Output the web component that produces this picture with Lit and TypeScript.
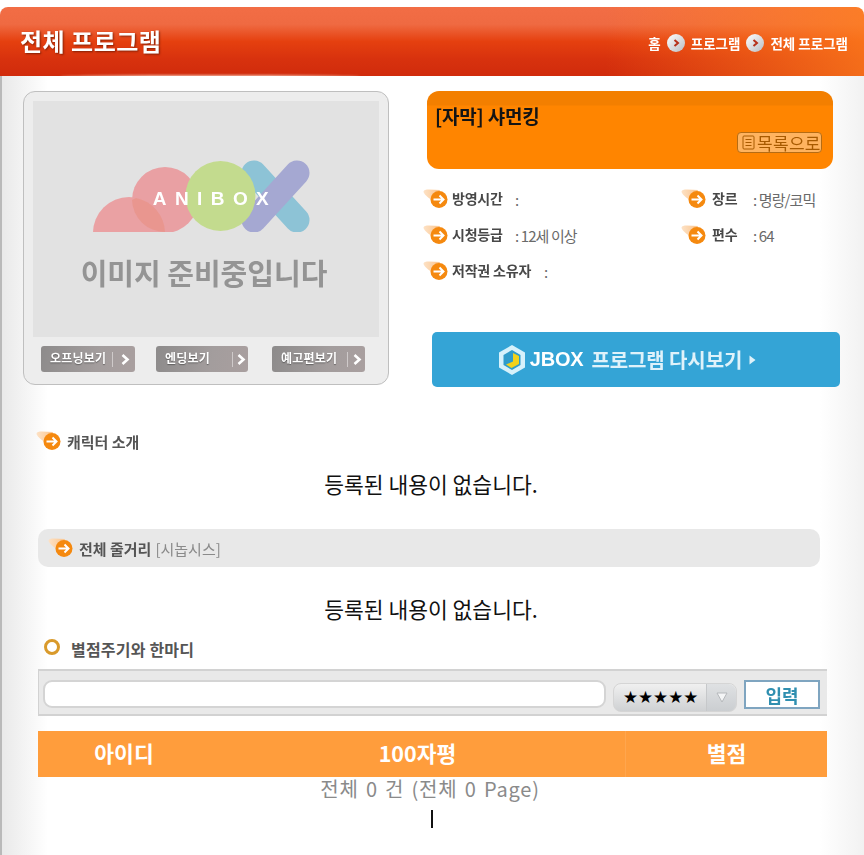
import { LitElement, html, css, svg } from 'lit';
import { customElement } from 'lit/decorators.js';

const arrowIcon = html`<svg class="arrow" width="26" height="20" viewBox="0 0 26 20">
  <defs>
    <linearGradient id="swoosh" x1="0" y1="0" x2="1" y2="0">
      <stop offset="0" stop-color="#fde2c6" />
      <stop offset="1" stop-color="#fbc48c" />
    </linearGradient>
  </defs>
  <path d="M0.5 3 C0.5 1 3 0.5 6 0.5 L17 1 L12 12 C8 11 1.5 6.5 0.5 3Z" fill="url(#swoosh)" />
  <circle cx="16" cy="10.5" r="8.5" fill="#f5890f" />
  <path d="M10.5 10.5 H20 M16.5 6.5 L20.5 10.5 L16.5 14.5" fill="none" stroke="#fff" stroke-width="2" />
</svg>`;

const crumbDot = html`<svg class="dot" width="18" height="18" viewBox="0 0 18 18">
  <defs>
    <linearGradient id="dotfill" x1="0" y1="0" x2="1" y2="1">
      <stop offset="0" stop-color="#ffffff" />
      <stop offset="1" stop-color="#b9bcc2" />
    </linearGradient>
  </defs>
  <circle cx="9" cy="9" r="9" fill="url(#dotfill)" />
  <path d="M7.5 6 L11 9 L7.5 12" fill="none" stroke="#b6301a" stroke-width="2" />
</svg>`;

const logo = svg`<svg class="logo" width="230" height="76" viewBox="90 158 230 76">
  <defs><clipPath id="base"><rect x="90" y="150" width="230" height="82" /></clipPath></defs>
  <g clip-path="url(#base)">
    <circle cx="166" cy="200" r="33" fill="#e9a0a3" />
    <circle cx="130" cy="233" r="36" fill="#eaa1a3" />
    <path d="M133 200 A33 33 0 0 0 166 232 A36 36 0 0 0 137 198 Z" fill="#e8938a" opacity=".8" />
    <path d="M255 173 L298 220" stroke="#8dc3d6" stroke-width="25" stroke-linecap="round" />
    <path d="M298 173 L255 220" stroke="#a5a8d2" stroke-width="25" stroke-linecap="round" />
    <circle cx="221.5" cy="196" r="35" fill="#c3db8e" />
  </g>
  <text x="216" y="205" text-anchor="middle" fill="#fff" font-size="19" font-weight="700"
    letter-spacing="8.4" font-family="Liberation Sans, sans-serif">ANIBOX</text>
</svg>`;

@customElement('app-root')
export class AppRoot extends LitElement {
  static styles = css`
    :host {
      display: block;
      min-height: 855px;
      padding-top: 7px;
      box-sizing: border-box;
      background: #fff;
      font-family: 'Noto Sans CJK KR', 'Noto Sans', sans-serif;
    }
    .head {
      position: relative;
      height: 69px;
      border-radius: 8px 8px 0 0;
      display: flex;
      align-items: center;
      justify-content: space-between;
      padding: 0 16px 0 20px;
      overflow: hidden;
      background:
        linear-gradient(90deg, rgba(255, 140, 40, 0) 70%, rgba(255, 130, 30, 0.75) 100%),
        linear-gradient(180deg, #f26d45 0%, #ef6a42 25%, #e5400f 50%, #d8320e 75%, #d02b0c 100%);
    }
    .head::after {
      content: '';
      position: absolute;
      left: 60px;
      bottom: -2px;
      width: 300px;
      height: 3px;
      border-radius: 50%;
      background: #f3b7a2;
      filter: blur(1px);
    }
    .head h1 {
      margin: 0 0 1px;
      font-size: 24px;
      line-height: 30px;
      font-weight: 700;
      color: #fff;
      text-shadow: 1px 1px 2px rgba(90, 20, 0, 0.7);
      letter-spacing: 0.5px;
      filter: blur(0.3px);
    }
    .crumbs {
      display: flex;
      align-items: center;
      gap: 5px;
      margin-top: 3px;
      color: #fff;
      font-size: 13.5px;
      font-weight: 700;
      letter-spacing: 0;
      filter: blur(0.3px);
    }
    .dot {
      margin: 0 1px;
    }
    .body {
      min-height: 779px;
      padding-top: 15px;
      box-sizing: border-box;
      border-left: 2px solid #b9b9b9;
      background: linear-gradient(
        90deg,
        #e9e9e9 0,
        #ffffff 46px,
        #ffffff 818px,
        #f1f1f1 864px
      );
    }
    .top {
      display: flex;
      height: 296px;
      padding-left: 21px;
    }
    .card {
      width: 366px;
      height: 294px;
      box-sizing: border-box;
      border: 1px solid #bfbfbf;
      border-radius: 12px;
      background: #ededed;
      padding: 9px 9px 0;
    }
    .noimg {
      height: 236px;
      background: #e2e2e2;
      display: flex;
      flex-direction: column;
      align-items: center;
      padding-top: 57px;
      box-sizing: border-box;
    }
    .logo {
      display: block;
      margin-right: 5px;
      filter: blur(0.5px);
    }
    .noimg p {
      margin: 18px 4px 0 0;
      font-size: 29px;
      line-height: 40px;
      font-weight: 700;
      color: #949494;
      filter: blur(0.7px);
    }
    .btns {
      display: flex;
      padding: 9px 0 0 8px;
    }
    .btn {
      height: 26px;
      border-radius: 3px;
      background: linear-gradient(100deg, #8d8b8b, #a39d9d 60%, #a99f9f);
      color: #fff;
      font-size: 12px;
      font-weight: 700;
      letter-spacing: 0.2px;
      display: flex;
      align-items: center;
      box-sizing: border-box;
      padding: 0 0 3px 9px;
      position: relative;
      text-shadow: 0 1px 1px rgba(60, 60, 60, 0.6);
      filter: blur(0.3px);
    }
    .btn i {
      position: absolute;
      top: 6px;
      width: 1px;
      height: 15px;
      background: #cfcaca;
    }
    .btn svg {
      position: absolute;
      top: 8px;
    }
    .right {
      width: 415px;
      margin-left: 38px;
    }
    .title {
      width: 406px;
      height: 78px;
      box-sizing: border-box;
      border-radius: 12px;
      background: linear-gradient(180deg, #f37f00 0, #f37f00 14px, #ff8500 15px);
      padding: 12px 11px 0 8px;
      display: flex;
      flex-direction: column;
    }
    .title h2 {
      margin: 0;
      font-size: 19px;
      line-height: 26px;
      font-weight: 700;
      color: #141414;
      letter-spacing: -0.2px;
      filter: blur(0.3px);
    }
    .golist {
      align-self: flex-end;
      margin-top: 3px;
      width: 85px;
      height: 21px;
      box-sizing: border-box;
      border: 1px solid #b56c14;
      border-radius: 4px;
      background: #ffb35f;
      color: #a85a00;
      font-size: 17px;
      line-height: 18px;
      letter-spacing: 0.3px;
      display: flex;
      align-items: center;
      gap: 2px;
      padding-left: 4px;
      filter: blur(0.3px);
    }
    .info {
      display: grid;
      grid-template-columns: 258px 1fr;
      grid-auto-rows: 36px;
      margin: 12px 0 0 -4px;
      height: 151px;
    }
    .item {
      display: flex;
      align-items: center;
      height: 36px;
    }
    .lbl {
      font-size: 14px;
      font-weight: 700;
      letter-spacing: -0.2px;
      color: #484848;
      margin: -3px 0 0 3px;
      min-width: 63px;
      filter: blur(0.3px);
    }
    .item.short .lbl {
      min-width: 41px;
      margin-left: 5px;
    }
    .item.wide .lbl {
      min-width: 92px;
    }
    .val {
      font-size: 15px;
      letter-spacing: -0.9px;
      color: #6a6a6a;
    }
    .jbox {
      margin-left: 5px;
      width: 408px;
      height: 55px;
      border-radius: 5px;
      background: #34a4d6;
      color: #fff;
      display: flex;
      align-items: center;
      justify-content: center;
      padding-right: 18px;
      box-sizing: border-box;
    }
    .jbox b {
      font-family: 'Liberation Sans', sans-serif;
      font-size: 20px;
      letter-spacing: -0.2px;
      margin: 0 8px 0 4px;
      filter: blur(0.3px);
    }
    .jbox span {
      font-size: 20px;
      font-weight: 700;
      letter-spacing: -0.1px;
      color: #dff2fa;
      filter: blur(0.3px);
    }
    .jbox svg:last-child {
      margin-left: 7px;
    }
    .sec {
      display: flex;
      align-items: center;
      height: 22px;
      margin: 43px 0 0 34px;
      font-size: 15px;
      font-weight: 700;
      color: #555;
      letter-spacing: 0;
    }
    .sec span {
      margin-left: 5px;
      filter: blur(0.3px);
    }
    .empty {
      margin: 0;
      height: 30px;
      line-height: 30px;
      font-size: 21.5px;
      text-align: center;
      color: #111;
      padding-right: 4px;
    }
    .sec + .empty {
      margin-top: 17px;
    }
    .bar {
      margin: 30px 0 0 36px;
      width: 782px;
      height: 38px;
      box-sizing: border-box;
      padding-left: 10px;
      border-radius: 10px;
      background: #e8e8e8;
      display: flex;
      align-items: center;
      font-size: 15px;
      color: #555;
      letter-spacing: 0;
    }
    .bar b {
      margin-left: 5px;
      filter: blur(0.3px);
    }
    .bar em {
      font-style: normal;
      color: #8a8a8a;
      margin-left: 4px;
      filter: blur(0.3px);
    }
    .bar + .empty {
      margin-top: 27px;
    }
    .rate {
      display: flex;
      align-items: center;
      margin: 13px 0 0 42px;
      height: 24px;
      font-size: 16px;
      font-weight: 700;
      letter-spacing: 0.2px;
      color: #555;
      gap: 11px;
    }
    .ring {
      width: 10px;
      height: 10px;
      border: 3px solid #d99a2b;
      border-radius: 50%;
      margin-top: -4px;
      background: #fff;
    }
    .form {
      margin: 8px 0 0 36px;
      width: 789px;
      height: 47px;
      box-sizing: border-box;
      border: 1px solid #d2d2d2;
      border-width: 2px 0 2px 1px;
      background: #e9e9e9;
      display: flex;
      align-items: flex-start;
      padding: 9px 0 0 4px;
    }
    .form input {
      width: 563px;
      height: 28px;
      box-sizing: border-box;
      border: 2px solid #d4d4d4;
      border-radius: 9px;
      background: #fff;
      outline: none;
      padding: 0 8px;
    }
    .stars {
      margin: 3px 0 0 7px;
      width: 124px;
      height: 29px;
      border-radius: 8px;
      box-sizing: border-box;
      background: linear-gradient(180deg, #f0f0f0, #cfd1d3);
      border: 1px solid #d5d5d5;
      display: flex;
      align-items: center;
    }
    .stars span {
      width: 92px;
      padding-left: 9px;
      box-sizing: border-box;
      font-family: 'DejaVu Sans', sans-serif;
      font-size: 16.8px;
      line-height: 27px;
      color: #000;
    }
    .stars i {
      flex: 1;
      height: 27px;
      border-left: 1px solid #c6c8ca;
      border-radius: 0 8px 8px 0;
      background: linear-gradient(180deg, #dfe1e3, #cbced1);
      display: flex;
      align-items: center;
      justify-content: center;
    }
    .form button {
      margin: 0 0 0 7px;
      width: 76px;
      height: 29px;
      border: 2px solid #7fa5c0;
      background: #fff;
      color: #2f8fb0;
      font-family: inherit;
      font-size: 18px;
      font-weight: 700;
      line-height: 24px;
      padding: 0;
      filter: blur(0.3px);
    }
    .thead {
      margin: 15px 0 0 36px;
      width: 789px;
      height: 46px;
      background: #ff9d3c;
      display: grid;
      grid-template-columns: 172px 415px 202px;
      color: #fff;
      font-size: 21.5px;
      font-weight: 700;
      line-height: 44px;
      text-align: center;
    }
    .thead div:last-child {
      border-left: 1px solid #ffa64e;
    }
    .total {
      margin: 0;
      height: 27px;
      line-height: 24px;
      text-align: center;
      color: #8a8a8a;
      font-size: 20px;
      letter-spacing: 0.8px;
      word-spacing: 2px;
      padding-right: 6px;
    }
    .pager {
      margin: 6px 0 0 429px;
      width: 2px;
      height: 18px;
      background: #111;
    }
  `;

  render() {
    return html`
      <header class="head">
        <h1>전체 프로그램</h1>
        <nav class="crumbs">
          <span>홈</span>${crumbDot}<span>프로그램</span>${crumbDot}<span>전체 프로그램</span>
        </nav>
      </header>
      <main class="body">
        <div class="top">
          <section class="card">
            <div class="noimg">
              ${logo}
              <p>이미지 준비중입니다</p>
            </div>
            <div class="btns">
              ${this.renderBtn('오프닝보기', 94, 65, 76, 0)}
              ${this.renderBtn('엔딩보기', 92, 70, 77, 21)}
              ${this.renderBtn('예고편보기', 93, 69, 77, 24)}
            </div>
          </section>
          <section class="right">
            <div class="title">
              <h2>[자막] 샤먼킹</h2>
              <div class="golist">
                <svg width="13" height="15" viewBox="0 0 13 15">
                  <rect x="1" y="1" width="11" height="13" rx="1" fill="none" stroke="#a85a00" />
                  <path d="M3.5 4.5H9.5M3.5 7.5H9.5M3.5 10.5H9.5" stroke="#a85a00" />
                </svg>
                목록으로
              </div>
            </div>
            <div class="info">
              <div class="item">${arrowIcon}<span class="lbl">방영시간</span><span class="val">:</span></div>
              <div class="item short">${arrowIcon}<span class="lbl">장르</span><span class="val">: 명랑/코믹</span></div>
              <div class="item">${arrowIcon}<span class="lbl">시청등급</span><span class="val">: 12세 이상</span></div>
              <div class="item short">${arrowIcon}<span class="lbl">편수</span><span class="val">: 64</span></div>
              <div class="item wide">${arrowIcon}<span class="lbl">저작권 소유자</span><span class="val">:</span></div>
            </div>
            <div class="jbox">
              <svg width="28" height="32" viewBox="0 0 28 32">
                <path d="M14 1 L27 8.5 V23.5 L14 31 L1 23.5 V8.5Z" fill="#d6f1fb" />
                <path d="M14 6 L22.5 11 V21 L14 26 L5.5 21 V11Z" fill="#2f9ccb" />
                <path d="M15 9 L21 12 V20 L13.5 24 L8 20.5 L15 17.5Z" fill="#f2d21b" />
              </svg>
              <b>JBOX</b>
              <span>프로그램 다시보기</span>
              <svg width="7" height="10" viewBox="0 0 7 10"><path d="M0.5 0.5 L6.5 5 L0.5 9.5Z" fill="#dff2fa" /></svg>
            </div>
          </section>
        </div>

        <div class="sec">${arrowIcon}<span>캐릭터 소개</span></div>
        <p class="empty">등록된 내용이 없습니다.</p>

        <div class="bar">${arrowIcon}<b>전체 줄거리</b><em>[시놉시스]</em></div>
        <p class="empty">등록된 내용이 없습니다.</p>

        <div class="rate"><i class="ring"></i><span>별점주기와 한마디</span></div>
        <div class="form">
          <input type="text" />
          <div class="stars">
            <span>★★★★★</span>
            <i>
              <svg width="12" height="11" viewBox="0 0 12 11">
                <path d="M1 1 H11 L6 10Z" fill="#f4f5f6" stroke="#b5b8bb" />
              </svg>
            </i>
          </div>
          <button>입력</button>
        </div>

        <div class="thead">
          <div>아이디</div>
          <div>100자평</div>
          <div>별점</div>
        </div>
        <p class="total">전체 0 건 (전체 0 Page)</p>
        <div class="pager"></div>
      </main>
    `;
  }

  renderBtn(label: string, width: number, sep: number, chev: number, gap: number) {
    return html`<div class="btn" style="width:${width}px;margin-left:${gap}px">
      ${label}
      <i style="left:${sep + 6}px"></i>
      <svg style="left:${chev + 4}px" width="9" height="11" viewBox="0 0 9 11">
        <path d="M1.5 1 L6.5 5.5 L1.5 10" fill="none" stroke="#fff" stroke-width="2.6" />
      </svg>
    </div>`;
  }
}
